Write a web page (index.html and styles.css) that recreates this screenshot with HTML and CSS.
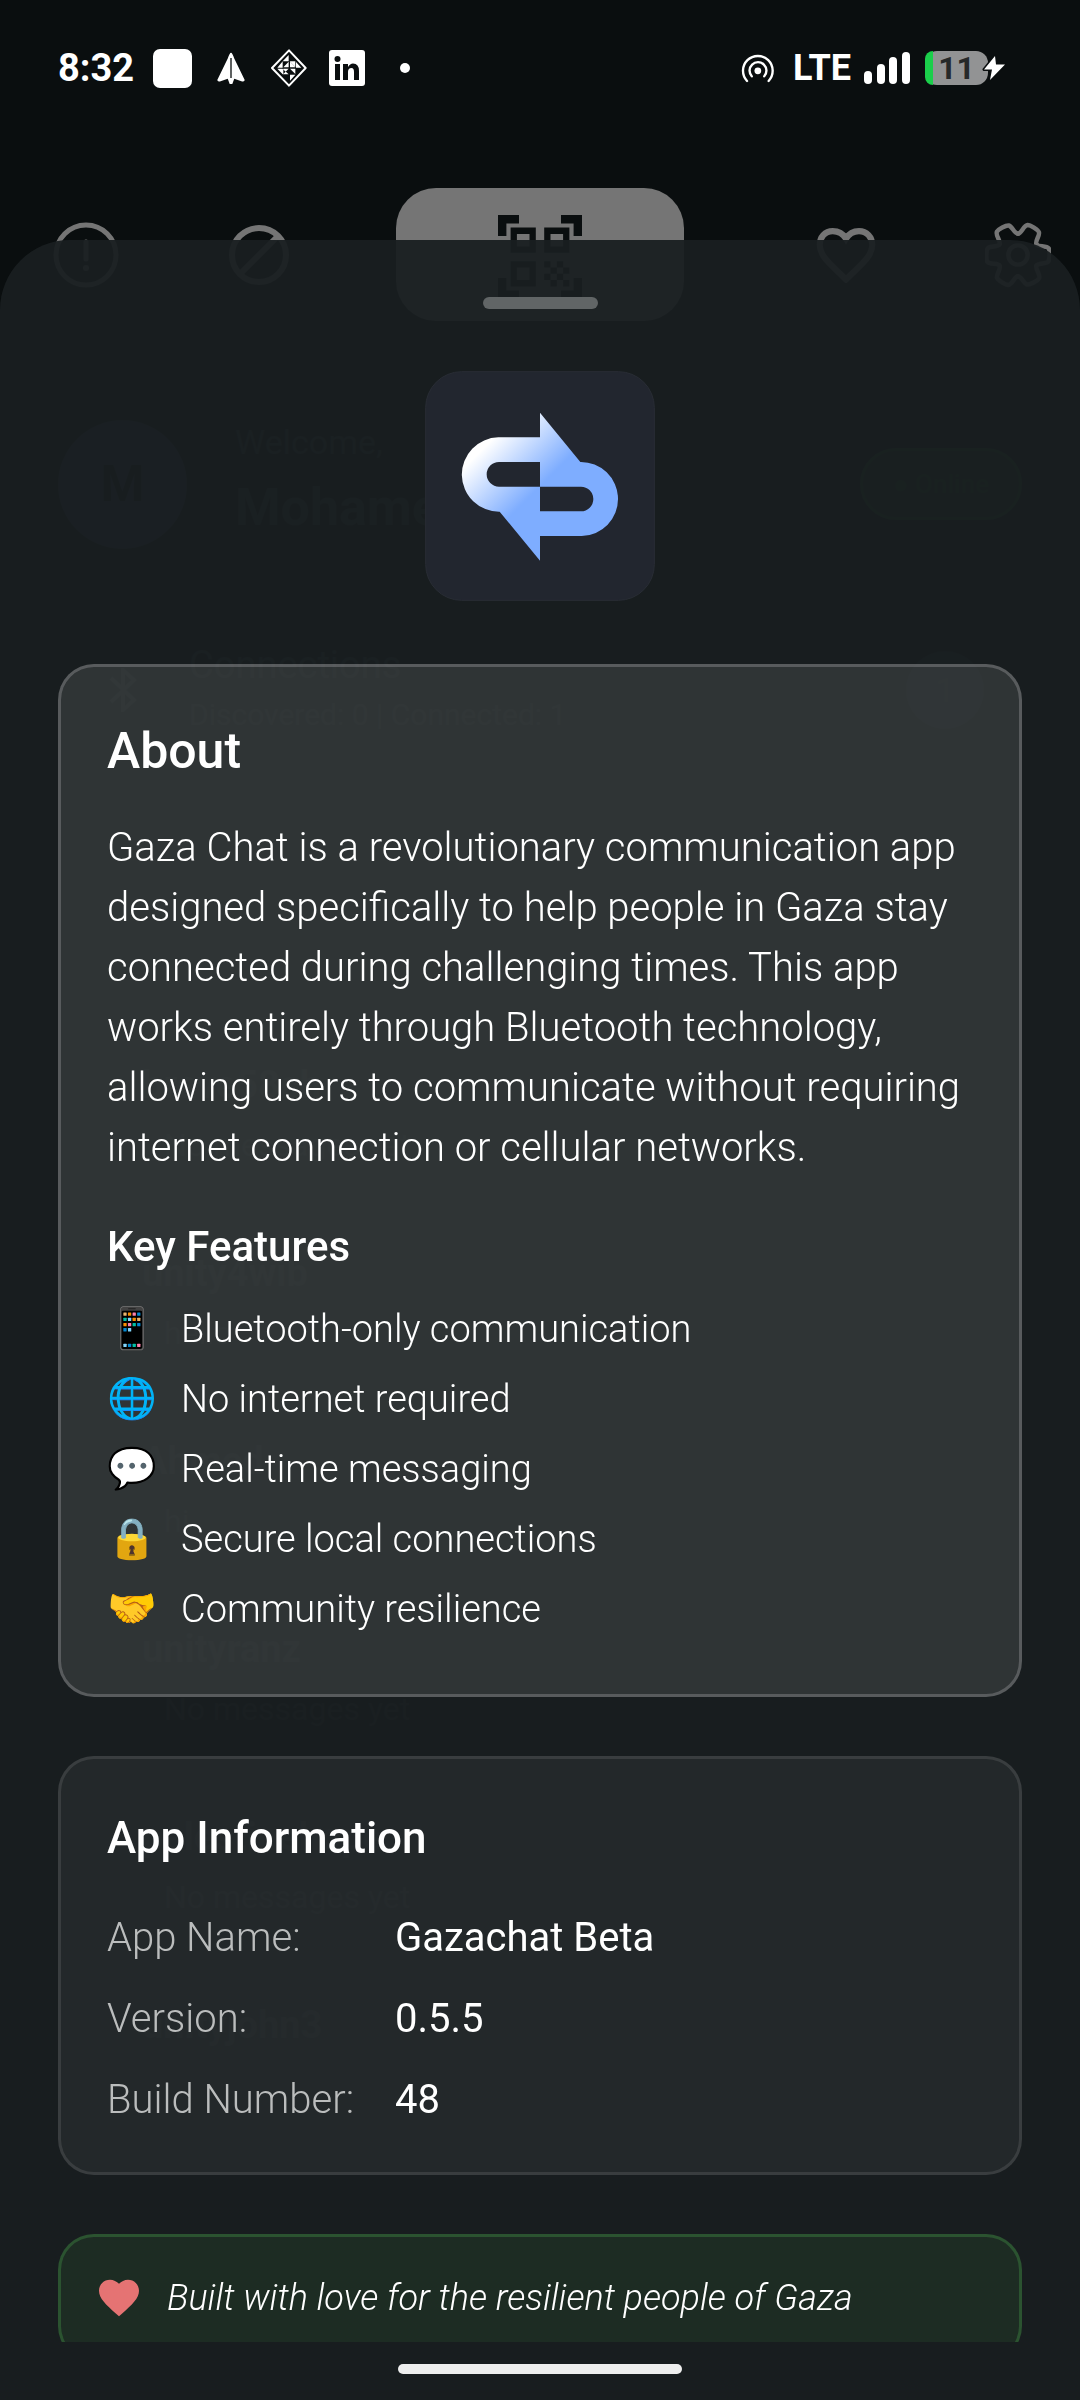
FILE: index.html
```html
<!DOCTYPE html>
<html lang="en">
<head>
<meta charset="utf-8">
<meta name="viewport" content="width=device-width, initial-scale=1">
<title>Gazachat</title>
<link rel="stylesheet" href="styles.css">
</head>
<body>
<header class="status">
  <div class="status-left">
    <span class="clock">8:32</span>
    <span class="square"></span>
    <svg class="ic-plane" width="28" height="32" viewBox="0 0 84 98"><path fill="#fff" d="M42 2Q46 2 52 20L84 86Q83 92 76 90L52 82L46 98H38L32 82L8 90Q1 92 0 86L32 20Q38 2 42 2Z"/><path d="M42 18V80" stroke="#0a0e0f" stroke-width="4"/></svg>
    <svg class="ic-diamond" width="38" height="38" viewBox="784 60 110 114"><path d="M839 64L889 117L839 170L788 117Z" fill="none" stroke="#fff" stroke-width="6" stroke-linejoin="round"/><path fill="#fff" d="M838 78V97H820ZM841 97H858V114ZM820 97V116H804ZM822 115L838 98V115ZM860 99L876 116H860ZM822 119H838L822 135ZM804 119H820V136ZM842 119H858V135ZM842 137H858L842 155ZM820 119V136H838L820 120ZM842 98V115H858Z"/></svg>
    <svg class="ic-in" width="36" height="36" viewBox="0 0 36 36"><rect width="36" height="36" rx="3" fill="#fff"/><g fill="#0a0e0f"><circle cx="8.500" cy="9" r="3"/><rect x="6" y="14" width="5" height="16"/><path d="M14 14H19V17Q21 13.500 24 13.500Q30 13.500 30 21V30H25V22Q25 18 22.500 18Q19 18 19 22V30H14Z"/></g></svg>
    <span class="dot"></span>
  </div>
  <div class="status-right">
    <svg width="34" height="29" viewBox="580 71 97 86"><g fill="none" stroke="#fff" stroke-width="7" stroke-linecap="round"><path d="M596 151A44 44 0 1 1 660 151"/><path d="M610 137A25 25 0 1 1 647 137"/></g><circle cx="628" cy="121" r="10" fill="#fff"/></svg>
    <span class="lte">LTE</span>
    <svg class="ic-bars" width="46" height="32" viewBox="0 0 46 32"><g fill="#fff"><rect y="19" width="8" height="13" rx="4"/><rect x="13" y="12" width="8" height="20" rx="4"/><rect x="25" y="5" width="8" height="27" rx="4"/><rect x="38" width="8" height="32" rx="4"/></g></svg>
    <div class="battery"><span class="charge"></span><span class="level">11</span>
      <svg class="bolt" width="26" height="30" viewBox="0 0 26 30"><path d="M14 3L3 16.500H11L9 27L24 11.500H15Z" fill="#fff" stroke="#0a0e0f" stroke-width="3" paint-order="stroke" stroke-linejoin="round"/></svg>
    </div>
  </div>
</header>

<div class="home" aria-hidden="true">
  <nav class="tabs">
    <button class="tab" tabindex="-1"><svg width="66" height="66" viewBox="0 0 66 66"><g fill="none" stroke="#757575" stroke-width="5" stroke-linecap="round"><circle cx="33" cy="33" r="30"/><path d="M33 20V37"/></g><circle cx="33" cy="46" r="3" fill="#757575"/></svg></button>
    <button class="tab" tabindex="-1"><svg width="60" height="60" viewBox="0 0 60 60"><g fill="none" stroke="#757575" stroke-width="6"><circle cx="30" cy="30" r="27"/><path d="M49 11L11 49"/></g></svg></button>
    <button class="tab scan" tabindex="-1"><svg width="84" height="84" viewBox="2 2 20 20"><path fill="#0a0e0f" fill-rule="evenodd" d="M9.500 6.500v3h-3v-3h3M11 5H5v6h6V5zM9.500 14.500v3h-3v-3h3M11 13H5v6h6v-6zM17.500 6.500v3h-3v-3h3M19 5h-6v6h6V5zM13 13h1.500v1.500H13zM14.500 14.500H16V16h-1.500zM16 13h1.500v1.500H16zM13 16h1.500v1.500H13zM14.500 17.500H16V19h-1.500zM16 16h1.500v1.500H16zM17.500 14.500H19V16h-1.500zM17.500 17.500H19V19h-1.500zM22 7h-2V4h-3V2h5zM22 22v-5h-2v3h-3v2zM2 22h5v-2H4v-3H2zM2 2v5h2V4h3V2z"/></svg></button>
    <button class="tab" tabindex="-1"><svg width="60" height="56" viewBox="806 168 176 164"><path fill="none" stroke="#757575" stroke-width="18" d="M894 202C885 187 870 180 855 180C832 180 817 198 817 220C817 255 850 278 894 322C938 278 971 255 971 220C971 198 955 180 932 180C917 180 903 187 894 202Z"/></svg></button>
    <button class="tab" tabindex="-1"><svg width="66" height="66" viewBox="-96 -96 192 192"><defs><path id="tooth" d="M0-62C10-62 16-86 28-87C36-87 58-74 61-66C64-56 48-40 54-31"/></defs><g fill="none" stroke="#757575" stroke-width="13" stroke-linecap="round"><use href="#tooth"/><use href="#tooth" transform="rotate(60)"/><use href="#tooth" transform="rotate(120)"/><use href="#tooth" transform="rotate(180)"/><use href="#tooth" transform="rotate(240)"/><use href="#tooth" transform="rotate(300)"/><circle r="28"/></g></svg></button>
  </nav>
  <div class="profile">
    <span class="avatar">M</span>
    <div class="who"><span>Welcome,</span><strong>Mohamed</strong></div>
    <span class="online">● Online</span>
  </div>
  <div class="connections">
    <svg width="36" height="44" viewBox="0 0 36 44"><path d="M6 10L29 32L18 42V2L29 12L6 34" fill="none" stroke="#3c4042" stroke-width="4"/></svg>
    <div class="conn-text"><span>Connections</span><small>Discovered: 0 | Connected: 1</small></div>
    <span class="badge">1</span>
  </div>
  <div class="chats">
    <div class="chat"><strong>brave58ch</strong><span>No messages yet</span></div>
    <div class="chat"><strong>unity4wib</strong><span>hello</span></div>
    <div class="chat"><strong>Ahmed</strong><span>hi</span></div>
    <div class="chat"><strong>unityranz</strong><span>No messages yet</span></div>
    <div class="chat"><strong>palestinehope</strong><span>No messages yet</span></div>
    <div class="chat"><strong>unityjohn3</strong></div>
  </div>
</div>

<main class="sheet">
  <div class="handle"></div>
  <div class="content">
    <svg class="logo" width="230" height="230" viewBox="75 63 690 690" role="img" aria-label="Gazachat logo">
      <defs><linearGradient id="sky" gradientUnits="userSpaceOnUse" x1="230" y1="315" x2="372" y2="457"><stop stop-color="#fff"/><stop offset="1" stop-color="#7eadff"/></linearGradient></defs>
      <rect x="77" y="65" width="686" height="686" rx="108" fill="#22262f" stroke="#292d35" stroke-width="3"/>
      <path fill="url(#sky)" fill-rule="evenodd" d="M420 262H295A111 111 0 0 0 299 485L420 632V558H545A111 111 0 0 0 541 336L420 188ZM420 336H297A37 37 0 0 0 297 410H420ZM420 410H543A37 37 0 0 1 543 484H420Z"/>
    </svg>
    <section class="card about">
      <h1>About</h1>
      <p>Gaza Chat is a revolutionary communication app designed specifically to help people in Gaza stay connected during challenging times. This app works entirely through Bluetooth technology, allowing users to communicate without requiring internet connection or cellular networks.</p>
      <h2>Key Features</h2>
      <ul>
        <li><span class="emoji">📱</span>Bluetooth-only communication</li>
        <li><span class="emoji">🌐</span>No internet required</li>
        <li><span class="emoji">💬</span>Real-time messaging</li>
        <li><span class="emoji">🔒</span>Secure local connections</li>
        <li><span class="emoji">🤝</span>Community resilience</li>
      </ul>
    </section>
    <section class="card info">
      <h2>App Information</h2>
      <dl>
        <dt>App Name:</dt><dd>Gazachat Beta</dd>
        <dt>Version:</dt><dd>0.5.5</dd>
        <dt>Build Number:</dt><dd>48</dd>
      </dl>
    </section>
    <section class="card love">
      <svg width="40" height="38" viewBox="2 3 20 18.350"><path fill="#e57373" d="M12 21.350l-1.450-1.320C5.400 15.360 2 12.280 2 8.500 2 5.420 4.420 3 7.500 3c1.740 0 3.410.81 4.500 2.090C13.090 3.810 14.760 3 16.500 3 19.580 3 22 5.420 22 8.500c0 3.780-3.400 6.860-8.550 11.540z"/></svg>
      <em>Built with love for the resilient people of Gaza</em>
    </section>
  </div>
  <div class="homebar"><span></span></div>
</main>
</body>
</html>
```
FILE: styles.css
```css
* { box-sizing: border-box; margin: 0; padding: 0; }
body {
  min-height: 100vh;
  background: #0a0e0f;
  color: #fff;
  font-family: Roboto, "Noto Sans", sans-serif;
  overflow: hidden;
}
.status {
  display: flex;
  justify-content: space-between;
  align-items: center;
  height: 136px;
  padding: 0 76px 0 58px;
}
.status-left, .status-right { display: flex; align-items: center; }
.clock { font: 700 38px/44px Roboto, sans-serif; width: 95px; }
.square { width: 39px; height: 39px; border-radius: 7px; background: #fff; }
.ic-plane { margin-left: 25px; }
.ic-diamond { margin-left: 25px; }
.ic-in { margin-left: 21px; }
.dot { width: 10px; height: 10px; border-radius: 50%; background: #fff; margin-left: 35px; }
.lte { font: 700 36px/44px "Liberation Sans Narrow", Roboto, sans-serif; margin-left: 18px; min-width: 56px; }
.ic-bars { margin-left: 13px; }
.battery {
  position: relative;
  display: flex;
  align-items: center;
  justify-content: center;
  width: 63px;
  height: 34px;
  margin-left: 15px;
  margin-right: 16px;
  border-radius: 12px;
  background: #929394;
  color: #262929;
}
.charge {
  position: absolute;
  left: 0;
  width: 8px;
  height: 34px;
  border-radius: 12px 0 0 12px;
  background: #1bcf4b;
}
.level { font: 700 32px/34px Roboto, sans-serif; }
.bolt { position: absolute; left: 56px; top: 2px; }

.home { padding-top: 52px; color: #34383a; }
.tabs {
  display: grid;
  grid-template-columns: 160fr 160fr 360fr 206fr 114fr;
  justify-items: center;
  align-items: center;
}
.tab { display: flex; border: 0; background: none; }
.scan {
  width: 288px;
  height: 133px;
  align-items: center;
  justify-content: center;
  padding-top: 4px;
  border-radius: 40px;
  background: #757575;
}
.profile { display: flex; align-items: center; padding: 97px 58px 0; }
.avatar {
  width: 129px;
  height: 129px;
  border-radius: 50%;
  background: #32364c;
  font: 700 50px/129px Roboto, sans-serif;
  text-align: center;
  color: #0a0e0f;
}
.who { display: flex; flex-direction: column; flex: 1; margin-left: 48px; font-size: 34px; line-height: 48px; }
.who strong { font-size: 52px; line-height: 84px; }
.online {
  width: 162px;
  border: 3px solid #205020;
  border-radius: 36px;
  background: #143014;
  font: 500 26px/66px Roboto, sans-serif;
  text-align: center;
  color: #205020;
}
.connections { display: flex; align-items: center; padding: 90px 96px 0 105px; }
.conn-text { display: flex; flex-direction: column; flex: 1; margin-left: 48px; font-size: 38px; line-height: 50px; }
.conn-text small { font-size: 30px; }
.badge { width: 78px; height: 78px; border-radius: 50%; background: #22262a; text-align: center; font-size: 34px; line-height: 78px; }
.chats { padding: 310px 58px 0 142px; color: #282c2e; }
.chat { display: flex; flex-direction: column; height: 188px; line-height: 50px; font-size: 32px; }
.chat strong { font-size: 38px; line-height: 70px; }
.chat span { margin-left: 22px; }

.sheet {
  position: fixed;
  inset: 240px 0 0;
  display: flex;
  flex-direction: column;
  align-items: stretch;
  border-radius: 70px 70px 0 0;
  background: rgba(25, 31, 33, 0.95);
}
.handle {
  flex: none;
  align-self: center;
  width: 115px;
  height: 12px;
  margin: 57px 0 62px;
  border-radius: 6px;
  background: #616566;
}
.content {
  flex: 1;
  min-height: 0;
  overflow: hidden;
  display: flex;
  flex-direction: column;
  padding: 0 58px;
}
.logo { flex: none; align-self: center; margin-bottom: 63px; }
.card {
  flex: none;
  border: 3px solid rgba(255, 255, 255, 0.1);
  border-radius: 36px;
  background: rgba(255, 255, 255, 0.05);
  padding: 46px;
}
.about { border-color: rgba(255, 255, 255, 0.2); background: rgba(255, 255, 255, 0.1); padding-right: 36px; padding-bottom: 50px; }
h1 { font-size: 50px; font-weight: 500; line-height: 76px; }
h2 { font-size: 42px; font-weight: 500; line-height: 64px; }
.about p { margin-top: 29px; font-size: 40px; font-weight: 300; line-height: 60px; }
.about h2 { margin-top: 37px; }
ul { list-style: none; margin-top: 15px; }
li { display: flex; align-items: center; height: 70px; font-size: 38px; font-weight: 300; }
.emoji { width: 74px; font-size: 40px; line-height: 60px; }
.info { margin-top: 59px; padding-bottom: 32px; }
.info h2 { font-size: 44px; line-height: 66px; }
dl { display: grid; grid-template-columns: 288px 1fr; margin-top: 26px; font-size: 40px; line-height: 81px; }
dt { font-weight: 300; color: #bbbdbd; }
.love {
  display: flex;
  align-items: center;
  gap: 28px;
  height: 128px;
  margin-top: 59px;
  padding: 0 38px;
  border-color: rgba(76, 175, 80, 0.3);
  background: rgba(76, 175, 80, 0.1);
  font-size: 36px;
  font-weight: 300;
}
.homebar { flex: none; display: flex; justify-content: center; height: 58px; padding-top: 22px; }
.homebar span { width: 284px; height: 10px; border-radius: 5px; background: #eee; }
```
